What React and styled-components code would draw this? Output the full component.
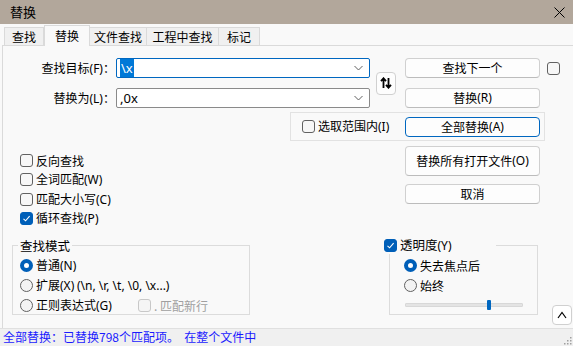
import React from 'react'
import styled, { createGlobalStyle, css } from 'styled-components'

const GlobalStyle = createGlobalStyle`
  body {
    margin: 0;
    font-family: "Noto Sans CJK SC", "Noto Sans", sans-serif;
    font-size: 12px;
    color: #000;
  }
`

const Window = styled.div`
  width: 573px;
  height: 346px;
  display: flex;
  flex-direction: column;
  background: #f9f9f9;
  overflow: hidden;
`
const TitleBar = styled.div`
  height: 24px;
  flex: none;
  background: #b2a79b;
  display: flex;
  align-items: center;
  justify-content: space-between;
  padding: 0 7px 0 10px;
  font-size: 13px;
  line-height: 24px;
`
const CloseBtn = styled.div`
  width: 14px;
  height: 14px;
  display: flex;
  align-items: center;
  justify-content: center;
`
const Body = styled.div`
  flex: 1;
  display: flex;
  flex-direction: column;
`
const Tabs = styled.div`
  height: 21px;
  flex: none;
  display: flex;
  align-items: flex-end;
  padding-left: 4px;
  position: relative;
  z-index: 1;
`
const Tab = styled.div`
  width: ${p => p.$w}px;
  height: 18px;
  box-sizing: border-box;
  border: 1px solid #dadada;
  border-bottom: none;
  border-left-width: ${p => (p.$first ? 1 : 0)}px;
  background: #f0f0f0;
  text-align: center;
  line-height: 17px;
  font-size: 12px;
  ${p =>
    p.$active &&
    css`
      height: 21px;
      margin-bottom: -1px;
      background: #f9f9f9;
      border-left-width: 1px;
      line-height: 19px;
      padding-bottom: 2px;
    `}
`
const Panel = styled.div`
  flex: 1;
  margin-left: 2px;
  border-top: 1px solid #dadada;
  border-left: 1px solid #dadada;
  display: flex;
  flex-direction: column;
`
const TopGrid = styled.div`
  margin-top: 12px;
  display: grid;
  grid-template-columns: 113px 254px 26px 144px 20px;
  grid-template-rows: 20px 20px;
  row-gap: 10px;
  align-items: center;
`
const FieldLabel = styled.div`
  justify-self: end;
  padding-right: 1px;
  line-height: 20px;
  white-space: nowrap;
`
const Combo = styled.div`
  height: 20px;
  box-sizing: border-box;
  border: 1px solid ${p => (p.$focus ? '#0067c0' : '#8a8a8a')};
  border-radius: 2px;
  background: #fff;
  display: flex;
  align-items: center;
  padding: 0 6px 0 3px;
  font-size: 13px;
  line-height: 16px;
`
const ComboText = styled.span`
  flex: 1;
  font-family: "Noto Sans", sans-serif;
`
const Selected = styled.span`
  background: #0078d7;
  color: #fff;
  padding: 0 1px;
`
const SwapBtn = styled.div`
  grid-row: 1 / span 2;
  grid-column: 3;
  justify-self: end;
  width: 20px;
  height: 23px;
  box-sizing: border-box;
  border: 1px solid #d0d0d0;
  border-radius: 4px;
  background: #fdfdfd;
  display: flex;
  align-items: center;
  justify-content: center;
`
const Button = styled.div`
  width: 135px;
  height: ${p => p.$h || 20}px;
  box-sizing: border-box;
  justify-self: end;
  border: 1px solid ${p => (p.$default ? '#0067c0' : '#d0d0d0')};
  border-bottom-color: ${p => (p.$default ? '#0067c0' : '#bcbcbc')};
  border-radius: 4px;
  background: #fdfdfd;
  display: flex;
  align-items: center;
  justify-content: center;
  font-size: 12px;
  line-height: 16px;
`
const Box = styled.span`
  width: 13px;
  height: 13px;
  box-sizing: border-box;
  flex: none;
  border-radius: 3px;
  border: 1px solid ${p => (p.$disabled ? '#c8c8c8' : '#616161')};
  background: ${p => (p.$disabled ? '#f5f5f5' : '#f7f7f7')};
  display: flex;
  align-items: center;
  justify-content: center;
  ${p =>
    p.$checked &&
    css`
      border-color: #005fb8;
      background: #005fb8;
    `}
`
const CheckRow = styled.div`
  height: ${p => p.$h || 19}px;
  display: flex;
  align-items: center;
  gap: 3px;
  white-space: nowrap;
  line-height: 16px;
  color: ${p => (p.$disabled ? '#a0a0a0' : '#000')};
`
const Dot = styled.span`
  width: 13px;
  height: 13px;
  box-sizing: border-box;
  flex: none;
  border-radius: 50%;
  border: 1px solid #616161;
  background: #f3f3f3;
  ${p =>
    p.$on &&
    css`
      border: 4px solid #005fb8;
      background: #fff;
    `}
`
const Mn = styled.span`
  font-family: "Noto Sans", sans-serif;
  font-size: 12px;
`
const SelRow = styled.div`
  margin-top: 4px;
  display: flex;
  justify-content: flex-end;
  padding-right: 28px;
`
const SelBox = styled.div`
  width: 255px;
  height: 29px;
  box-sizing: border-box;
  border: 1px solid #e2e2e2;
  display: flex;
  align-items: center;
  justify-content: space-between;
  padding: 0 4px 0 11px;
`
const MidRow = styled.div`
  margin-top: 5px;
  display: flex;
  justify-content: space-between;
  padding: 0 33px 0 17px;
`
const Checks = styled.div`
  display: flex;
  flex-direction: column;
  padding-top: 5px;
  gap: 0.3px;
`
const Buttons = styled.div`
  display: flex;
  flex-direction: column;
  gap: 8px;
`
const BottomRow = styled.div`
  margin-top: 17px;
  display: flex;
  align-items: flex-start;
  padding-left: 9px;
`
const Group = styled.div`
  position: relative;
  width: ${p => p.$w}px;
  height: 70px;
  box-sizing: border-box;
  margin-left: ${p => p.$ml || 0}px;
  border: 1px solid #dcdcdc;
  padding: ${p => p.$pad};
`
const Legend = styled.div`
  position: absolute;
  top: -9px;
  left: ${p => p.$left}px;
  width: ${p => (p.$w ? `${p.$w}px` : 'auto')};
  padding: 0 2px;
  background: #f9f9f9;
  line-height: 17px;
  font-size: 12.5px;
`
const Slider = styled.div`
  position: relative;
  width: 118px;
  height: 4px;
  margin: 7px 0 0 1px;
  box-sizing: border-box;
  border: 1px solid #d8d8d8;
  background: #e4e4e4;
  border-radius: 1px;
`
const Thumb = styled.div`
  position: absolute;
  top: -4px;
  width: 4px;
  height: 10px;
  background: #0067c0;
  border-radius: 1px;
`
const UpBtn = styled.div`
  margin: 60px 0 0 14px;
  width: 20px;
  height: 20px;
  box-sizing: border-box;
  border: 1px solid #d0d0d0;
  border-radius: 4px;
  background: #fff;
  display: flex;
  align-items: center;
  justify-content: center;
`
const StatusBar = styled.div`
  height: 18px;
  flex: none;
  box-sizing: border-box;
  border-top: 1px solid #e0e0e0;
  background: #f0f0f0;
  color: #1a1aff;
  padding-left: 3px;
  line-height: 16px;
  font-size: 12px;
  position: relative;
  white-space: pre;
`
const Grip = styled.svg`
  position: absolute;
  right: 1px;
  bottom: 1px;
`

const Check = () => (
  <svg width="9" height="9" viewBox="0 0 9 9">
    <path d="M1.5 4.8 L3.6 6.8 L7.6 2.2" fill="none" stroke="#fff" strokeWidth="1.1" />
  </svg>
)

const CheckItem = ({ checked, disabled, children, h }) => (
  <CheckRow $disabled={disabled} $h={h}>
    <Box $checked={checked} $disabled={disabled}>{checked && <Check />}</Box>
    <span>{children}</span>
  </CheckRow>
)

const Radio = ({ on, children }) => (
  <CheckRow $h={20}>
    <Dot $on={on} />
    <span>{children}</span>
  </CheckRow>
)

const Chevron = () => (
  <svg width="9" height="6" viewBox="0 0 9 6">
    <path d="M0.5 1 L4.5 5 L8.5 1" fill="none" stroke="#606060" strokeWidth="1" />
  </svg>
)

const tabs = [
  { t: '查找', w: 40 },
  { t: '替换', w: 46, active: true },
  { t: '文件查找', w: 57 },
  { t: '工程中查找', w: 72 },
  { t: '标记', w: 41 },
]

export default function App() {
  return (
    <Window>
      <GlobalStyle />
      <TitleBar>
        <span>替换</span>
        <CloseBtn>
          <svg width="11" height="11" viewBox="0 0 11 11">
            <path d="M0.5 0.5 L10.5 10.5 M10.5 0.5 L0.5 10.5" stroke="#000" strokeWidth="1" />
          </svg>
        </CloseBtn>
      </TitleBar>
      <Body>
        <Tabs>
          {tabs.map((t, i) => (
            <Tab key={t.t} $w={t.w} $active={t.active} $first={i === 0}>
              {t.t}
            </Tab>
          ))}
        </Tabs>
        <Panel>
          <TopGrid>
            <FieldLabel>查找目标<Mn>(F)</Mn>：</FieldLabel>
            <Combo $focus>
              <ComboText><Selected>\x</Selected></ComboText>
              <Chevron />
            </Combo>
            <SwapBtn>
              <svg width="12" height="12" viewBox="0 0 12 12">
                <path d="M3.5 11 V2 M1 4.2 L3.5 1.3 L6 4.2" fill="none" stroke="#000" strokeWidth="1.8" />
                <path d="M8.5 1 V10 M6 7.8 L8.5 10.7 L11 7.8" fill="none" stroke="#000" strokeWidth="1.8" />
              </svg>
            </SwapBtn>
            <Button>查找下一个</Button>
            <Box style={{ justifySelf: 'end' }} />
            <FieldLabel>替换为<Mn>(L)</Mn>：</FieldLabel>
            <Combo>
              <ComboText>,0x</ComboText>
              <Chevron />
            </Combo>
            <Button>替换<Mn>(R)</Mn></Button>
          </TopGrid>
          <SelRow>
            <SelBox>
              <CheckItem>选取范围内<Mn>(I)</Mn></CheckItem>
              <Button $default>全部替换<Mn>(A)</Mn></Button>
            </SelBox>
          </SelRow>
          <MidRow>
            <Checks>
              <CheckItem>反向查找</CheckItem>
              <CheckItem>全词匹配<Mn>(W)</Mn></CheckItem>
              <CheckItem>匹配大小写<Mn>(C)</Mn></CheckItem>
              <CheckItem checked>循环查找<Mn>(P)</Mn></CheckItem>
            </Checks>
            <Buttons>
              <Button $h={30}>替换所有打开文件<Mn>(O)</Mn></Button>
              <Button>取消</Button>
            </Buttons>
          </MidRow>
          <BottomRow>
            <Group $w={238} $pad="10px 0 0 7px">
              <Legend $left={5}>查找模式</Legend>
              <Radio on>普通<Mn>(N)</Mn></Radio>
              <Radio>扩展<Mn>(X)</Mn> <Mn>(\n, \r, \t, \0, \x...)</Mn></Radio>
              <CheckRow $h={20}>
                <Dot />
                <span>正则表达式<Mn>(G)</Mn></span>
                <span style={{ width: 20 }} />
                <Box $disabled />
                <span style={{ color: '#a0a0a0' }}>. 匹配新行</span>
              </CheckRow>
            </Group>
            <Group $w={149} $ml={139} $pad="10px 0 0 14px">
              <Legend $left={-8} $w={110}>
                <CheckItem checked h={17}>透明度<Mn>(Y)</Mn></CheckItem>
              </Legend>
              <Radio on>失去焦点后</Radio>
              <Radio>始终</Radio>
              <Slider>
                <Thumb style={{ left: 81 }} />
              </Slider>
            </Group>
            <UpBtn>
              <svg width="10" height="8" viewBox="0 0 10 8">
                <path d="M1 7 L5 1.5 L9 7" fill="none" stroke="#000" strokeWidth="1.2" />
              </svg>
            </UpBtn>
          </BottomRow>
        </Panel>
      </Body>
      <StatusBar>
        全部替换：已替换798个匹配项。  在整个文件中
        <Grip width="8" height="8" viewBox="0 0 8 8">
          <g fill="#a0a0a0">
            <rect x="6" y="0" width="1.5" height="1.5" />
            <rect x="3" y="3" width="1.5" height="1.5" />
            <rect x="6" y="3" width="1.5" height="1.5" />
            <rect x="0" y="6" width="1.5" height="1.5" />
            <rect x="3" y="6" width="1.5" height="1.5" />
            <rect x="6" y="6" width="1.5" height="1.5" />
          </g>
        </Grip>
      </StatusBar>
    </Window>
  )
}
